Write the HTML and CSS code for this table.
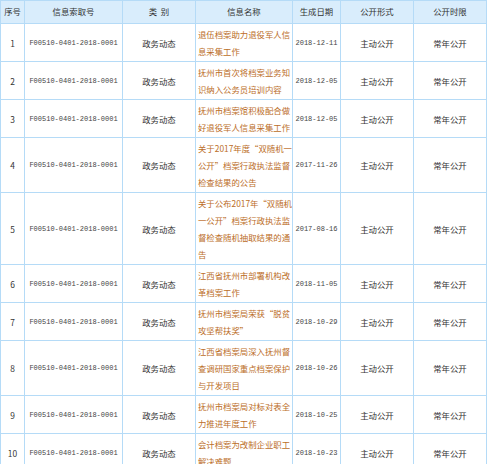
FILE: index.html
```html
<!DOCTYPE html>
<html lang="zh">
<head>
<meta charset="utf-8">
<link rel="stylesheet" href="styles.css">
</head>
<body>
<table class="list">
  <colgroup>
    <col class="c-no"><col class="c-id"><col class="c-type"><col class="c-title"><col class="c-date"><col class="c-form"><col class="c-limit">
  </colgroup>
  <thead>
    <tr><th>序号</th><th>信息索取号</th><th>类&nbsp;&nbsp;别</th><th>信息名称</th><th>生成日期</th><th>公开形式</th><th>公开时限</th></tr>
  </thead>
  <tbody>
    <tr><td>1</td><td class="mono">F00510-0401-2018-0001</td><td>政务动态</td><td class="title">退伍档案助力退役军人信<br>息采集工作</td><td class="mono">2018-12-11</td><td>主动公开</td><td>常年公开</td></tr>
    <tr><td>2</td><td class="mono">F00510-0401-2018-0001</td><td>政务动态</td><td class="title">抚州市首次将档案业务知<br>识纳入公务员培训内容</td><td class="mono">2018-12-05</td><td>主动公开</td><td>常年公开</td></tr>
    <tr><td>3</td><td class="mono">F00510-0401-2018-0001</td><td>政务动态</td><td class="title">抚州市档案馆积极配合做<br>好退役军人信息采集工作</td><td class="mono">2018-12-05</td><td>主动公开</td><td>常年公开</td></tr>
    <tr><td>4</td><td class="mono">F00510-0401-2018-0001</td><td>政务动态</td><td class="title">关于2017年度“双随机一<br>公开”档案行政执法监督<br>检查结果的公告</td><td class="mono">2017-11-26</td><td>主动公开</td><td>常年公开</td></tr>
    <tr><td>5</td><td class="mono">F00510-0401-2018-0001</td><td>政务动态</td><td class="title">关于公布2017年“双随机<br>一公开”档案行政执法监<br>督检查随机抽取结果的通<br>告</td><td class="mono">2017-08-16</td><td>主动公开</td><td>常年公开</td></tr>
    <tr><td>6</td><td class="mono">F00510-0401-2018-0001</td><td>政务动态</td><td class="title">江西省抚州市部署机构改<br>革档案工作</td><td class="mono">2018-11-05</td><td>主动公开</td><td>常年公开</td></tr>
    <tr><td>7</td><td class="mono">F00510-0401-2018-0001</td><td>政务动态</td><td class="title">抚州市档案局荣获“脱贫<br>攻坚帮扶奖”</td><td class="mono">2018-10-29</td><td>主动公开</td><td>常年公开</td></tr>
    <tr><td>8</td><td class="mono">F00510-0401-2018-0001</td><td>政务动态</td><td class="title">江西省档案局深入抚州督<br>查调研国家重点档案保护<br>与开发项目</td><td class="mono">2018-10-26</td><td>主动公开</td><td>常年公开</td></tr>
    <tr><td>9</td><td class="mono">F00510-0401-2018-0001</td><td>政务动态</td><td class="title">抚州市档案局对标对表全<br>力推进年度工作</td><td class="mono">2018-10-25</td><td>主动公开</td><td>常年公开</td></tr>
    <tr><td>10</td><td class="mono">F00510-0401-2018-0001</td><td>政务动态</td><td class="title">会计档案为改制企业职工<br>解决难题</td><td class="mono">2018-10-23</td><td>主动公开</td><td>常年公开</td></tr>
  </tbody>
</table>
</body>
</html>
```

FILE: styles.css
```css
html, body {
  margin: 0;
  padding: 0;
  background: #ffffff;
}
body {
  font-family: "Noto Sans CJK SC", "Noto Sans", sans-serif;
  font-size: 8.4px;
  color: #333333;
}
.list {
  width: 486px;
  table-layout: fixed;
  border-collapse: collapse;
}
.c-no { width: 24px; }
.c-id { width: 98px; }
.c-type { width: 73px; }
.c-title { width: 97px; }
.c-date { width: 48px; }
.c-form { width: 73px; }
.c-limit { width: 73px; }
.list th,
.list td {
  border: 1px solid #b5dbf7;
  line-height: 17px;
  text-align: center;
  vertical-align: middle;
  white-space: nowrap;
  overflow: hidden;
  padding: 2px 0 1px;
}
.list th {
  background: #d9edfc;
  font-weight: normal;
  padding: 2px 0 3px;
}
.list td.title {
  text-align: left;
  padding-left: 2px;
  color: #bb6d27;
}
.list td.mono {
  font-family: "Liberation Mono", "DejaVu Sans Mono", monospace;
  font-size: 7px;
  color: #444444;
}
```
